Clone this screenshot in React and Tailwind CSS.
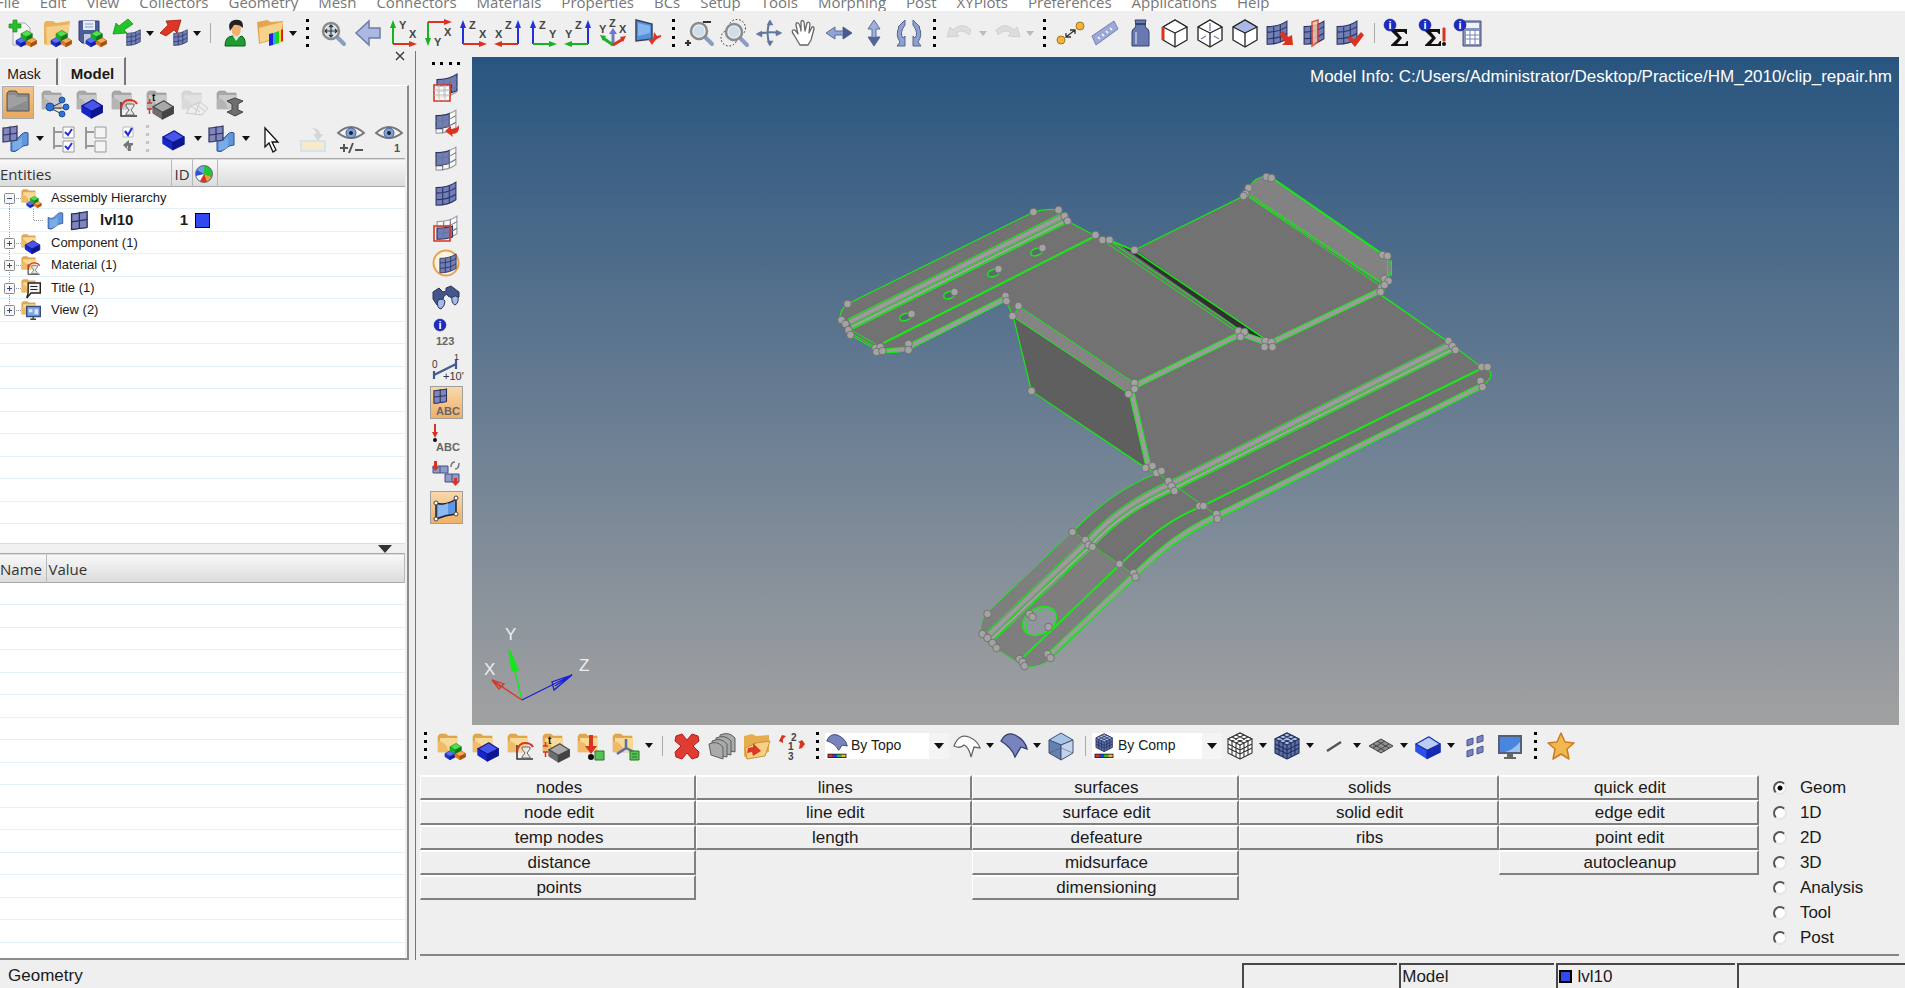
import { useState } from 'react';

const MENUS = [
  'File', 'Edit', 'View', 'Collectors', 'Geometry', 'Mesh', 'Connectors', 'Materials', 'Properties',
  'BCs', 'Setup', 'Tools', 'Morphing', 'Post', 'XYPlots', 'Preferences', 'Applications', 'Help',
];

const PAGES = ['Geom', '1D', '2D', '3D', 'Analysis', 'Tool', 'Post'];

const PANELS = [
  ['nodes', 'node edit', 'temp nodes', 'distance', 'points'],
  ['lines', 'line edit', 'length'],
  ['surfaces', 'surface edit', 'defeature', 'midsurface', 'dimensioning'],
  ['solids', 'solid edit', 'ribs'],
  ['quick edit', 'edge edit', 'point edit', 'autocleanup'],
];

/* ---------- icon parts, all drawn in a 28x28 box ---------- */

const Box = ({ x, y, s = 1, top, left, right }) => (
  <g transform={`translate(${x} ${y}) scale(${s})`} strokeLinejoin="round">
    <path d="M0 5l7 4v5l-7-4.500z" fill={left} stroke={left} />
    <path d="M7 9l8-4v5l-8 4z" fill={right} stroke={right} />
    <path d="M0 5l8-4.500 7 4.500-8 4z" fill={top} stroke={right} strokeWidth="0.800" />
  </g>
);

const BlueBox = ({ x = 10, y = 12, s = 1.1 }) => (
  <Box x={x} y={y} s={s} top="#4656ea" left="#1626c8" right="#0c1690" />
);

const GrayBox = ({ x = 10, y = 12, s = 1.1 }) => (
  <Box x={x} y={y} s={s} top="#a8a8a8" left="#6e6e6e" right="#444" />
);

const Cluster = ({ x = 0, y = 0 }) => (
  <g transform={`translate(${x} ${y})`}>
    <Box x={8} y={18} s={0.7} top="#5870f4" left="#1c30d0" right="#1020a0" />
    <Box x={18} y={18} s={0.7} top="#f6a860" left="#e07818" right="#a85008" />
    <Box x={13} y={11} s={0.75} top="#50e050" left="#18b020" right="#107818" />
  </g>
);

const Folder = ({ gray, faded }) => (
  <g opacity={faded ? 0.3 : 1}>
    <path d="M1 4l2-2h6l2 2h9v16H1z" fill={gray ? '#a9a9a9' : '#e2a64e'} stroke={gray ? '#8a8a8a' : '#d79a44'} strokeWidth="0.500" />
    <path d="M3 6h17l1 -2v13l-4 3H3z" fill={gray ? '#c9c9c9' : '#f8d995'} />
    <path d="M1 9q8 0 11 11H1z" fill={gray ? '#b4b4b4' : '#efbb66'} />
  </g>
);

const MESH_BLUE = '#707fb9';

const Mesh = ({ x = 3, y = 2, s = 1.1, wire, half }) => (
  <g transform={`translate(${x} ${y}) scale(${s})`} stroke={wire ? '#9a9a9a' : '#2b3560'} strokeWidth="1">
    <path d="M1 6q11 0 18-5v16q-7 5-18 5z" fill={wire ? '#f8f8f8' : MESH_BLUE} />
    {half === 'top' && <path d="M1 6q11 0 18-5v15l-5 2v-7q-6 2-13 1z" fill={MESH_BLUE} stroke="#2b3560" />}
    {half === 'left' && <path d="M1 6q8 0 12-2v12q-3 1-6 1v1l-6 0z" fill={MESH_BLUE} stroke="#2b3560" />}
    {half === 'bottom' && <path d="M1 12q9 0 14-2v10q-6 2-14 2z" fill={MESH_BLUE} stroke="#2b3560" />}
    <path d="M1 11q11 0 18-5M1 17q11 0 18-5M7 6v16M13 4v16" fill="none" stroke={wire ? '#6c7590' : '#2b3560'} />
  </g>
);

const MeshSmall = ({ x = 12, y = 11 }) => <Mesh x={x} y={y} s={0.75} />;

const Surf = ({ x = 8, y = 6 }) => (
  <g transform={`translate(${x} ${y})`}>
    <path d="M1 6q5 3 9-2t8-3v12q-5 0-9 4t-8 2z" fill="#5f97dc" stroke="#2d4f9a" />
    <path d="M3 8q5 2 9-3v10q-4 4-9 3z" fill="#86b5ec" opacity="0.700" />
  </g>
);

const Quad = ({ x, y, s = 1 }) => (
  <g transform={`translate(${x} ${y}) scale(${s})`} fill="#7f86c0" stroke="#2e3158" strokeWidth="1.200">
    <path d="M1 3q4 0 7-1v7q-3 1-7 1zM8 2q4 0 7-1v7q-3 1-7 1zM1 10q4 0 7-1v7q-3 1-7 1zM8 9q4 0 7-1v7q-3 1-7 1z" />
  </g>
);

const T = ({ x, y, size = 10, fill = '#444', children }) => (
  <text x={x} y={y} fontSize={size} fill={fill} fontWeight="bold" fontFamily="Liberation Sans, Arial, sans-serif">
    {children}
  </text>
);

const InfoDot = ({ x = 6, y = 6 }) => (
  <g>
    <circle cx={x} cy={y} r="6" fill="#1a2cc4" stroke="#0c1680" strokeWidth="0.500" />
    <T x={x - 1.5} y={y + 4} size={11} fill="#fff">i</T>
  </g>
);

const Curve = ({ x = 9, y = 11 }) => (
  <g transform={`translate(${x} ${y})`} fill="none">
    <path d="M1 2v14h16" stroke="#333" strokeWidth="1.500" />
    <path d="M1 8Q3 0 9 0q6 0 8 4" stroke="#e03020" strokeWidth="2" />
    <path d="M6 4h8v2l-3 4 3 4v1H6v-1l3-4-3-4z" fill="#e8e8e8" stroke="#666" />
  </g>
);

const Gauge = () => (
  <g>
    <T x={6} y={12} size={10} fill="#111">t</T>
    <path d="M1 14h5M3.500 10v4M1 20h5M3.500 20v5" stroke="#e03020" strokeWidth="1.500" />
  </g>
);

const Glass = ({ x = 0, y = 0 }) => (
  <g transform={`translate(${x} ${y})`}>
    <path d="M16 17l8 8" stroke="#8c9cc4" strokeWidth="4" strokeLinecap="round" />
    <circle cx="11" cy="12" r="8" fill="#e9f0f6" stroke="#8b8b8b" strokeWidth="2.500" />
    <circle cx="11" cy="12" r="5.500" fill="#cfdde9" />
  </g>
);

const GREEN = '#16b422';
const RED = '#dc3220';
const BLUE = '#2430d8';

const Axis = ({ x, y, up, across, upColor, acrossColor, labels }) => (
  <g>
    <path d={`M${x} ${y}v${up * 18}`} stroke={upColor} strokeWidth="2" />
    <path d={`M${x - 3} ${y + up * 16}l3 ${up * 8}l3 ${-up * 8}z`} fill={upColor} />
    <path d={`M${x} ${y}h${across * 17}`} stroke={acrossColor} strokeWidth="2" />
    <path d={`M${x + across * 16} ${y - 3}l${across * 8} 3l${-across * 8} 3z`} fill={acrossColor} />
    {labels.map(([t, lx, ly]) => <T key={t} x={lx} y={ly} size={11}>{t}</T>)}
  </g>
);

const Cube = ({ children, top = '#fff' }) => (
  <g stroke="#222" strokeWidth="1.300" fill="#fff" strokeLinejoin="round">
    <path d="M2 8L14 1l12 7v13l-12 7-12-7z" />
    <path d="M2 8L14 1l12 7-12 6z" fill={top} />
    <path d="M14 14v13" />
    {children}
  </g>
);

const Rubik = ({ fill, top, line = '#333', s = 1, x = 0, y = 0 }) => (
  <g transform={`translate(${x} ${y}) scale(${s})`} stroke={line} strokeWidth="1.100" strokeLinejoin="round">
    <path d="M2 7L14 1l12 6v14l-12 6-12-6z" fill={fill} />
    <path d="M2 7L14 1l12 6-12 6z" fill={top} />
    <path d="M14 13v14M6 5l12 6v14M10 3l12 6v14M22 5L10 11v14M18 3L6 9v14M2 12l12 6 12-6M2 16l12 6 12-6" fill="none" />
  </g>
);

const Monitor = () => (
  <g>
    <path d="M11 22h6v3h3v2H8v-2h3z" fill="#666" />
    <path d="M2 3h24v19H2z" fill="#555f78" />
    <path d="M4 5h20v15H4z" fill="#4a86e0" />
    <path d="M9 20q8-2 15-10v10z" fill="#9cc2f2" />
  </g>
);

const ICONS = {
  newModel: (
    <g>
      <path d="M5 4h12l5 5v17H5z" fill="#f4f4f4" stroke="#aaa" />
      <path d="M1 5h4V1h4v4h4v4H9v4H5V9H1z" fill="#28c028" stroke="#108010" strokeWidth="0.600" />
      <Cluster />
    </g>
  ),
  openModel: <g><path d="M1 4l2-2h7l3 2 14-2-3 20-20 4-3-1z" fill="#e9b25b" /><path d="M3 8l19-2 5-1-5 17-18 4z" fill="#f5d08a" /><Cluster /></g>,
  saveModel: (
    <g>
      <path d="M1 2h20v22H4l-3-3z" fill="#4c5c98" stroke="#303c70" />
      <path d="M5 2h12v9H5z" fill="#e6ecf6" />
      <path d="M7 5h8M7 8h8" stroke="#8ea0c8" />
      <path d="M6 15h10v9H6z" fill="#c4cbe0" />
      <Cluster />
    </g>
  ),
  importFile: <g><MeshSmall x={13} y={10} /><path d="M0 15l3-11 3 3 9-7 5 5-9 6 3 3z" fill="#22c428" stroke="#108418" strokeWidth="0.700" /></g>,
  exportFile: <g><MeshSmall x={13} y={10} /><path d="M0 14l8-8-2-4 15-1-4 13-3-3-8 6z" fill="#e03424" stroke="#901408" strokeWidth="0.700" /></g>,
  user: (
    <g>
      <path d="M4 27q0-10 8-10l4 2 5-2q4 3 3 10z" fill="#1e9c30" stroke="#0e5c18" />
      <path d="M12 17l3 5 4-5z" fill="#d8e8d8" />
      <path d="M10 5q8-5 10 4l-1 6q-4 5-8-1z" fill="#f0b070" />
      <path d="M9 12Q6 3 13 1q10-2 9 8-4-4-9-3z" fill="#222" />
    </g>
  ),
  profiles: (
    <g>
      <path d="M1 3l10-2 4 2 12-1v16L3 25z" fill="#e2a64e" />
      <path d="M3 9l11-3 13-3-3 14-20 7z" fill="#f7d28c" />
      <path d="M13 15l4-1v12l-4 1z" fill="#2020e0" /><path d="M17 14l3-1v12l-3 1z" fill="#20b0f0" />
      <path d="M20 13l3-1v12l-3 1z" fill="#20d020" /><path d="M23 12l2-1v12l-2 1z" fill="#f0e020" /><path d="M25 11l2-1v12l-2 1z" fill="#e02010" />
    </g>
  ),
  fit: <g><Glass x={1} y={0} /><path d="M12 6v12M6 12h12M10 8l2-2 2 2M10 16l2 2 2-2M8 10l-2 2 2 2M16 10l2 2-2 2" fill="none" stroke="#333" strokeWidth="1.200" /></g>,
  back: <path d="M2 14L15 2v7h11v10H15v7z" fill="#a9b9e2" stroke="#6d7ca8" strokeWidth="1.500" />,
  xyTop: <Axis x={4} y={25} up={-1} across={1} upColor={GREEN} acrossColor={RED} labels={[['Y', 10, 10], ['X', 20, 19]]} />,
  xyBottom: <Axis x={4} y={3} up={1} across={1} upColor={GREEN} acrossColor={RED} labels={[['X', 20, 17], ['Y', 10, 27]]} />,
  xzLeft: <Axis x={4} y={25} up={-1} across={1} upColor={BLUE} acrossColor={RED} labels={[['Z', 10, 10], ['X', 20, 19]]} />,
  xzRight: <Axis x={24} y={25} up={-1} across={-1} upColor={BLUE} acrossColor={RED} labels={[['Z', 11, 10], ['X', 1, 19]]} />,
  yzFront: <Axis x={4} y={25} up={-1} across={1} upColor={BLUE} acrossColor={GREEN} labels={[['Z', 10, 10], ['Y', 20, 19]]} />,
  yzRear: <Axis x={24} y={25} up={-1} across={-1} upColor={BLUE} acrossColor={GREEN} labels={[['Z', 11, 10], ['Y', 1, 19]]} />,
  iso: (
    <g>
      <path d="M14 27V12" stroke="#6c78c8" strokeWidth="3" /><path d="M10 15l4-6 4 6z" fill="#6c78c8" />
      <path d="M14 26L4 19" stroke={GREEN} strokeWidth="3" /><path d="M1 16l6 1-3 5z" fill={GREEN} />
      <path d="M14 26l10-6" stroke={RED} strokeWidth="3" /><path d="M27 17l-6 1 3 5z" fill={RED} />
      <T x={10} y={8} size={11}>Z</T><T x={0} y={14} size={11}>Y</T><T x={20} y={14} size={11}>X</T>
    </g>
  ),
  savedView: (
    <g>
      <path d="M2 1l16 4v15L2 22z" fill="#5590dc" stroke="#345" strokeWidth="1.500" />
      <path d="M4 4l12 3v7L4 17z" fill="#86b4ee" />
      <path d="M14 20l4 6q3-6 9-8v-2l-4 1-3-4-1 7z" fill="#e03420" />
    </g>
  ),
  zoomInOut: <g><Glass x={3} y={0} /><path d="M18 3h8M0 24h6M3 21v6" stroke="#333" strokeWidth="2.200" /></g>,
  zoomArea: <g><circle cx="17" cy="9" r="8.500" fill="none" stroke="#222" strokeDasharray="1.500 2" /><circle cx="9" cy="19" r="8" fill="none" stroke="#222" strokeDasharray="1.500 2" /><Glass x={3} y={1} /></g>,
  center: (
    <g stroke="#64779c" strokeWidth="2" fill="#64779c">
      <path d="M15 2q-5 12 0 24M3 15q12-3 22-1" fill="none" />
      <path d="M12 6l3-5 3 5zM12 22l3 5 3-5zM7 12l-6 3 6 3zM21 11l6 3-6 3z" strokeWidth="0.500" />
    </g>
  ),
  pan: (
    <path
      d="M10 26L4 16q-3-4-1-5t5 4L6 6q0-3 2-2t3 8V3q1-3 3 0l1 9 2-8q2-2 3 1l-1 9 3-6q2-1 2 2l-3 11-3 5z"
      fill="#fff" stroke="#666" strokeWidth="1.300" strokeLinejoin="round"
    />
  ),
  rotateH: <g><path d="M1 14l9-6v4h8V8l9 6-9 6v-4h-8v4z" fill="#8fa3d4" stroke="#5d6c9c" /><path d="M18 8l9 6-9 6z" fill="#4a598e" /></g>,
  rotateV: <g><path d="M14 1l6 9h-4v8h4l-6 9-6-9h4v-8H8z" fill="#9fb1dc" stroke="#5d6c9c" /><path d="M8 18h12l-6 9z" fill="#54649a" /></g>,
  spin: (
    <g fill="#8ea1d2" stroke="#55648f">
      <path d="M3 8l7-7v5q-6 8-2 13l2-2v10H2l3-4Q0 16 4 8z" />
      <path d="M25 8l-7-7v5q6 8 2 13l-2-2v10h8l-3-4q5-7 1-15z" />
    </g>
  ),
  undo: <path d="M1 18L4 8l3 3q9-9 18 0l-2 5q-7-7-13-2l3 3z" fill="#dcdede" stroke="#cfd2d2" />,
  redo: <path d="M27 18L24 8l-3 3Q12 2 3 11l2 5q7-7 13-2l-3 3z" fill="#dcdede" stroke="#cfd2d2" />,
  nodes: (
    <g>
      <circle cx="5" cy="21" r="4" fill="#f4b43c" stroke="#a87818" /><circle cx="24" cy="7" r="4" fill="#f4b43c" stroke="#a87818" />
      <path d="M10 18l9-7M10 14v4h5M14 11h5v4" fill="none" stroke="#333" strokeWidth="1.300" />
    </g>
  ),
  ruler: <g><path d="M1 17L23 2l4 8L5 26z" fill="#9ca9d8" stroke="#7382b8" /><path d="M7 18l2 2M11 15l2 2M15 12l2 2M19 9l2 2" stroke="#fff" strokeWidth="1.500" /></g>,
  mass: <g><path d="M9 1h11l-1 5 1 3q3 1 3 4v14H6V13q0-3 3-4l1-3z" fill="#6779b0" stroke="#35436e" /><path d="M10 13v12" stroke="#a6b3da" strokeWidth="2" /><path d="M9 5h11" stroke="#35436e" strokeWidth="2" /></g>,
  cubeEdge: <Cube><path d="M2 8v13" stroke={RED} strokeWidth="3" /></Cube>,
  cubeHidden: <Cube><path d="M14 4v8M10 17l-5 3M18 17l5 3" stroke="#7080b0" /></Cube>,
  cubeFace: <Cube top="#a9b9e4" />,
  meshArrow: <g><Mesh x={0} y={1} /><path d="M13 15l4-3 5 6 4-2 1 10H16l3-3z" fill={RED} /></g>,
  meshCut: <g><Mesh x={2} y={1} /><path d="M11 3l6-2v22l-6 4z" fill="#f6c8a8" opacity="0.800" stroke={RED} strokeWidth="1.500" /></g>,
  meshCheck: <g><Mesh x={0} y={1} /><path d="M11 19l4-2 3 4 7-8 3 3-9 12z" fill={RED} /></g>,
  sigma: <g><path d="M6 10h16v5h-1l-2-2h-7l5 6-5 6h8l2-3h1v5H6v-1l7-7-7-7z" fill="#111" /><InfoDot x={5} y={6} /></g>,
  sigmaAlert: <g><path d="M5 10h15v5h-1l-2-2h-6l5 6-5 6h7l2-3h1v5H5v-1l7-7-7-7z" fill="#111" /><InfoDot x={5} y={6} /><path d="M23 9h2v13h-2z" fill={RED} stroke={RED} /><circle cx="24" cy="25" r="2" fill="#111" /></g>,
  calc: <g><path d="M8 2h18v25H8z" fill="#8994bc" stroke="#444f78" /><path d="M11 4h13v5H11z" fill="#eef2fa" /><path d="M11 12h13v13H11z" fill="#fff" /><path d="M11 16h13M11 20h13M15 12v13M20 12v13" stroke="#7482b4" /><InfoDot x={5} y={6} /></g>,

  folderGray: <g><path d="M3 4l2-2h7l2 3h11v17H3z" fill="#8d8d8d" stroke="#555" /><path d="M4 6h7l2 2h10v4L4 20z" fill="#b4b4b4" opacity="0.500" /></g>,
  folderTree: (
    <g>
      <Folder gray />
      <path d="M9 19l12-6M9 19h14M9 19l12 6" stroke="#333" />
      <g fill="#2f72d8" stroke="#123c88" strokeWidth="0.800"><circle cx="9" cy="18" r="4" /><circle cx="21" cy="11" r="3" /><circle cx="25" cy="18" r="3" /><circle cx="21" cy="25" r="3" /></g>
    </g>
  ),
  folderBlue: <g><Folder gray /><BlueBox x={6} y={10} s={1.35} /></g>,
  folderCurve: <g><Folder gray /><Curve x={9} y={11} /></g>,
  folderThick: <g><Folder gray /><Gauge /><GrayBox x={7} y={11} s={1.35} /></g>,
  folderFaded: <g opacity="0.350"><Folder gray /><path d="M5 24l5-7 9-4 8 6-6 7zM10 17l9 6M19 13l-5 12M14 15l10 7" fill="#eee" stroke="#888" /></g>,
  folderBeam: <g><Folder gray /><path d="M11 12l8-3 8 3-5 3v6l5 2-8 4-8-4 5-2v-6z" fill="#6f6f6f" stroke="#444" /></g>,
  elemSurf: <g><Surf x={8} y={7} /><Quad x={0} y={0} s={1} /></g>,
  allOn: (
    <g>
      <path d="M4 2v22M4 7h8M4 21h8" stroke="#999" strokeWidth="2" />
      <path d="M13 2h11v11H13zM13 16h11v11H13z" fill="#fff" stroke="#999" />
      <path d="M15 7l3 3 4-6M15 21l3 3 4-6" fill="none" stroke={BLUE} strokeWidth="2" />
    </g>
  ),
  allOff: <g><path d="M4 2v22M4 7h8M4 21h8" stroke="#999" strokeWidth="2" /><path d="M13 2h11v11H13zM13 16h11v11H13z" fill="#f4f4f4" stroke="#999" /></g>,
  reverse: <g><path d="M9 12V2h10v10z" fill="#fff" stroke="#bbb" /><path d="M11 6l3 4 4-7" fill="none" stroke={BLUE} strokeWidth="2.200" /><path d="M9 20l6-5v3h4v2q-3 0-2 6h-3q-1-2 0-5h-1v3z" fill="#777" /></g>,
  blueSlab: <BlueBox x={3} y={5} s={1.4} />,
  cursor: <path d="M9 3v19l4-4 4 9 3-2-4-8h6z" fill="#fff" stroke="#111" strokeWidth="1.300" />,
  addTo: <g opacity="0.700"><path d="M2 16h24v10H2z" fill="#fbe8b8" stroke="#c6e2ee" strokeWidth="2" /><path d="M13 3q8 0 8 6h3l-5 7-5-7h3q0-4-4-6z" fill="#ccc" /></g>,
  eyePM: (
    <g>
      <path d="M1 8Q14-4 27 8 14 18 1 8z" fill="#f2f4f8" stroke="#777" strokeWidth="1.800" />
      <circle cx="14" cy="8" r="5" fill="#7ea3dc" stroke="#4a5f90" /><circle cx="14" cy="8" r="2" fill="#222" />
      <path d="M3 23h8M7 19v8M12 28l4-10M18 25h8" stroke="#555" strokeWidth="2" />
    </g>
  ),
  eyeOne: (
    <g>
      <path d="M1 8Q14-4 27 8 14 18 1 8z" fill="#f2f4f8" stroke="#777" strokeWidth="1.800" />
      <circle cx="14" cy="8" r="5" fill="#7ea3dc" stroke="#4a5f90" /><circle cx="14" cy="8" r="2" fill="#222" />
      <T x={19} y={27} size={11} fill="#555">1</T>
    </g>
  ),

  maskBox: <g><Mesh x={4} y={-1} wire half="top" /><path d="M2 11h16v16H2z" fill="#fff" fillOpacity="0.700" stroke={RED} strokeWidth="1.600" /><path d="M7 11v16M13 11v16M2 16h16M2 21h16" stroke="#bbb" /></g>,
  maskReverse: <g><Mesh x={3} y={0} wire half="left" /><path d="M13 22l6-5v3q6 0 8-4 1 9-7 9l1 3z" fill={RED} /></g>,
  unmaskAdj: <Mesh wire half="left" />,
  unmaskAll: <Mesh />,
  unmaskBox: <g><Mesh x={4} y={1} wire half="bottom" /><path d="M2 12h16v15H2z" fill="none" stroke={RED} strokeWidth="1.600" /></g>,
  sphere: <g><circle cx="14" cy="14" r="12.500" fill="#fbf3e4" stroke="#eaa04c" strokeWidth="2" /><Mesh x={7} y={4} s={0.9} /></g>,
  find: (
    <g fill="#44568a" stroke="#27345e">
      <path d="M1 8l6-4 4 4 3-1 0-3 5-2 8 6v5l-5 2-6-3-1-2-3 2-2 6-5 3-4-6z" />
      <path d="M6 16q5-2 7 1 0 5-4 8-5-1-3-9zM20 13q4-2 6 0 1 6-3 8-4-2-3-8z" fill="#a9bbe4" />
    </g>
  ),
  numbers: <g><InfoDot x={8} y={6} /><T x={4} y={26} size={11} fill="#666">123</T></g>,
  scale: (
    <g>
      <path d="M2 17v8M2 21l22-11M24 6v9" stroke="#44598f" strokeWidth="2.200" fill="none" />
      <text x="0" y="14" fontSize="10" fill="#333" fontFamily="Liberation Sans">0</text>
      <text x="22" y="6" fontSize="9" fill="#333" fontFamily="Liberation Sans">1</text>
      <text x="11" y="26" fontSize="11" fill="#333" fontFamily="Liberation Sans">+10&#39;</text>
    </g>
  ),
  elemAbc: <g><Quad x={1} y={-1} s={0.9} /><T x={4} y={26} size={11} fill="#666">ABC</T></g>,
  loadAbc: <g><path d="M3 0v10" stroke={RED} strokeWidth="2" /><path d="M0 8h6l-3 6z" fill={RED} /><circle cx="3" cy="16" r="2" fill="#111" /><T x={4} y={27} size={11} fill="#666">ABC</T></g>,
  loadsElem: (
    <g>
      <path d="M1 7h15v7H1zM13 15h14v8H13z" fill="#8d9cca" stroke="#43517f" /><path d="M8 7v7M20 15v8" stroke="#43517f" />
      <path d="M2 2h3v6h2l-3.500 4L0 8h2zM22 19h3v4h2l-3.500 4-3.500-4h2z" fill={RED} />
      <path d="M19 8q0-5 4-5M27 4q0 6-4 6" stroke="#777" fill="none" strokeWidth="1.500" />
    </g>
  ),
  surfPoints: (
    <g>
      <path d="M4 9q10 3 20-4v15q-10 1-20 5z" fill="#5f97e8" stroke="#222" strokeWidth="1.500" />
      <path d="M6 11q6 1 10-2v11q-5 1-10 3z" fill="#8cb8f4" />
      <g fill="#fff" stroke="#444"><circle cx="4" cy="9" r="2" /><circle cx="24" cy="4" r="2" /><circle cx="24" cy="20" r="2" /><circle cx="4" cy="25" r="2" /></g>
    </g>
  ),

  assembly: <g><Folder /><Cluster /></g>,
  component: <g><Folder /><BlueBox x={6} y={10} s={1.35} /></g>,
  material: <g><Folder /><Curve /></g>,
  property: <g><Folder /><Gauge /><GrayBox x={7} y={11} s={1.35} /></g>,
  loadCol: <g><Folder /><path d="M12 3h4v11h4l-6 8-6-8h4z" fill={RED} /><circle cx="14" cy="25" r="3" fill="#111" /><path d="M18 19h9v9h-9z" fill="#58c058" stroke="#207820" /></g>,
  systemCol: <g><Folder /><path d="M14 7v9l-9 6M14 16l8 4" fill="none" stroke="#5c6fa8" strokeWidth="2.500" /><path d="M18 19h9v9h-9z" fill="#58c058" stroke="#207820" /><path d="M20 22h5M20 25h5" stroke="#207820" /></g>,
  remove: <path d="M3 4l6-2 5 6 5-6 6 2 1 5-6 5 6 6-1 5-6 2-5-6-5 6-6-2-1-5 6-6-6-5z" fill="#e03c34" stroke="#b02018" />,
  cards: (
    <g fill="#a9abab" stroke="#5c5e5e">
      <path d="M12 3q9-4 15 3v14l-15-3z" /><path d="M8 6q9-4 15 3v14L8 20z" /><path d="M4 9q9-4 15 3v13L4 22z" /><path d="M1 12q8-4 14 3v12L3 23z" />
    </g>
  ),
  organize: <g><path d="M1 4l8-2 4 2 13-1v17L4 27l-3-3z" fill="#e8ac50" /><path d="M2 16l11-5 14-2-5 15-18 3z" fill="#f7d088" stroke="#d09038" /><path d="M5 16l5-1 0-4 8 8-8 5-1-4-5 1z" fill="#e03820" /></g>,
  renumber: <g><T x={13} y={9}>2</T><T x={10} y={18}>1</T><T x={10} y={28}>3</T><path d="M1 9l3-6 4 1-3 3v4zM27 12l-3-4-4 2 2 1-1 6 3-1z" fill={RED} /></g>,
  surfWire: <path d="M1 14Q6 1 16 5q9 4 11 11l-6-1-3 10q-2-10-7-12-4 4-10 1z" fill="#fff" stroke="#666" strokeWidth="1.300" />,
  surfSolid: <path d="M1 9Q6-1 15 3q10 5 12 14l-6-2-6 10Q12 16 1 9z" fill="#7784bd" stroke="#333d70" strokeWidth="1.300" />,
  glassCube: (
    <g stroke="#40527c" strokeLinejoin="round">
      <path d="M2 8L14 1l12 7-12 5z" fill="#a7c3e6" /><path d="M2 8l12 5v15L2 21z" fill="#6781ae" /><path d="M26 8l-12 5v15l12-7z" fill="#c1d4ea" />
      <path d="M14 16l12 5M14 16L2 21" fill="none" opacity="0.500" />
    </g>
  ),
  rubikWire: <Rubik fill="#fff" top="#fff" />,
  rubikSolid: <Rubik fill="#5b6fa8" top="#a9bfe6" line="#24305c" />,
  lineElem: <path d="M7 19L21 10" stroke="#555" strokeWidth="2.500" />,
  shell: <g stroke="#444" fill="#8d908c"><path d="M2 14l12-7 12 7-12 7z" /><path d="M6 12l12 7M10 9l12 7M22 12l-12 7M18 9L6 16" /></g>,
  slab: <Box x={2} y={4} s={1.6} top="#b8cdf0" left="#2c50e8" right="#182cb0" />,
  tiles: <g fill="#7a84bc" stroke="#4a5590"><path d="M6 8l6-2v6l-6 2zM16 5l6-2v6l-6 2zM6 19l6-2v6l-6 2zM16 16l6-2v6l-6 2z" /></g>,
  monitor: <Monitor />,
  star: <path d="M14 1l4 9 9 1-7 6 2 10-8-5-8 5 2-10-7-6 9-1z" fill="#f2b850" stroke="#d07a20" strokeWidth="1.500" strokeLinejoin="round" />,
  title: <g><Folder /><path d="M10 7h17v14H14l-6 7 2-7z" fill="#f4f4f4" stroke="#222" strokeWidth="2" /><path d="M13 12h10M13 16h10" stroke="#222" strokeWidth="1.500" /></g>,
  view: <g><Folder /><path d="M8 9h19v14H8z" fill="#7da8e8" stroke="#3a4c78" strokeWidth="2" /><path d="M11 13h5v4h-5zM19 13h5v7h-5z" fill="#dce8fa" /><path d="M17 23v4M13 27h8" stroke="#444" strokeWidth="2" /></g>,
  surface: <Surf x={5} y={5} />,
  elements: <Quad x={4} y={3} s={1.3} />,
  byTopo: <g><path d="M2 8Q6-1 14 1q10 4 12 13l-6-1-4 6Q12 11 2 8z" fill="#7784bd" stroke="#333d70" /><ColorBar /></g>,
  byComp: <g><Rubik fill="#5b6fa8" top="#a9bfe6" line="#24305c" s={0.8} x={3} y={-1} /><ColorBar /></g>,
};

function ColorBar() {
  return (
    <g>
      <path d="M3 23h22v5H3z" fill="#222" /><path d="M4 24h5v3H4z" fill="#e03020" /><path d="M9 24h5v3H9z" fill="#2040e0" />
      <path d="M14 24h5v3h-5z" fill="#20c020" /><path d="M19 24h5v3h-5z" fill="#f0b040" />
    </g>
  );
}

const Icon = ({ name, className = 'size-7' }) => (
  <svg viewBox="0 0 28 28" className={`${className} shrink-0 overflow-visible`} aria-hidden="true">{ICONS[name]}</svg>
);

/* ---------- toolbar pieces ---------- */

const Tool = ({ name }) => (
  <button type="button" aria-label={name} className="flex h-7 w-[35px] shrink-0 items-center justify-center">
    <Icon name={name} />
  </button>
);

const Caret = ({ faded }) => (
  <button type="button" aria-label="More options" className="flex h-7 w-3 shrink-0 items-center justify-center">
    <svg viewBox="0 0 8 5" className="h-[5px] w-2"><path d="M0 0h8L4 5z" fill={faded ? '#bbb' : '#111'} /></svg>
  </button>
);

const Grip = () => (
  <div className="flex h-7 w-4 shrink-0 flex-col items-center justify-between">
    {[0, 1, 2, 3].map(i => <span key={i} className="size-[3px] bg-black" />)}
  </div>
);

const Sep = () => (
  <div className="flex h-7 w-[14px] shrink-0 justify-center"><span className="my-1 w-px bg-[#aaa]" /></div>
);

// "|" separator, ":" grip, "v" caret, "-" faded caret
const Tools = ({ items }) => items.map((item, i) => {
  if (item === '|') return <Sep key={i} />;
  if (item === ':') return <Grip key={i} />;
  if (item === 'v') return <Caret key={i} />;
  if (item === '-') return <Caret key={i} faded />;
  return <Tool key={i} name={item} />;
});

const Combo = ({ icon, label, options, className }) => (
  <div className={`relative flex h-[26px] shrink-0 items-center bg-white ${className}`}>
    <Icon name={icon} className="size-6" />
    <select
      aria-label={label}
      className="h-full min-w-0 flex-1 appearance-none bg-transparent pl-[2px] text-[14px] outline-none"
    >
      {options.map(o => <option key={o}>{o}</option>)}
    </select>
    <span className="pointer-events-none absolute inset-y-0 right-0 flex w-5 items-center justify-center bg-[#f4f4f4]">
      <svg viewBox="0 0 10 6" className="h-[6px] w-[10px]"><path d="M0 0h10L5 6z" fill="#111" /></svg>
    </span>
  </div>
);

const TopToolbar = () => (
  <div className="flex h-10 shrink-0 items-start overflow-hidden bg-[#efefef] pt-2 pl-1">
    <Tools
      items={[
        'newModel', 'openModel', 'saveModel', 'importFile', 'v', 'exportFile', 'v', '|', 'user', 'profiles', 'v', ':',
        'fit', 'back', 'xyTop', 'xyBottom', 'xzLeft', 'xzRight', 'yzFront', 'yzRear', 'iso', 'savedView', ':',
        'zoomInOut', 'zoomArea', 'center', 'pan', 'rotateH', 'rotateV', 'spin', ':', 'undo', '-', 'redo', '-', ':',
        'nodes', 'ruler', 'mass', 'cubeEdge', 'cubeHidden', 'cubeFace', 'meshArrow', 'meshCut', 'meshCheck', '|',
        'sigma', 'sigmaAlert', 'calc',
      ]}
    />
  </div>
);

/* ---------- model browser ---------- */

const ROWS = [
  { icon: 'component', label: 'Component (1)' },
  { icon: 'material', label: 'Material (1)' },
  { icon: 'title', label: 'Title (1)' },
  { icon: 'view', label: 'View (2)' },
];

const Expander = ({ open, last }) => (
  <button type="button" aria-label={open ? 'Collapse' : 'Expand'} className="shrink-0">
    <svg viewBox="0 0 21 22" className="h-[22px] w-[21px]">
      <path d={open ? 'M9.500 11v11' : last ? 'M9.500 0v11' : 'M9.500 0v22'} stroke="#999" strokeDasharray="1 1" />
      <path d="M14 11.500h7" stroke="#999" strokeDasharray="1 1" />
      <rect x="4.500" y="6.500" width="10" height="10" rx="1" fill="#f6f6f6" stroke="#8a8a8a" />
      <path d={open ? 'M7 11.500h5' : 'M7 11.500h5M9.500 9v5'} stroke="#2b4a9c" />
    </svg>
  </button>
);

const TreeRow = ({ icon, label, open, last }) => (
  <tr className="h-[22px] border-b border-[#e2f1fa] even:h-[23px]">
    <td colSpan={4} className="p-0">
      <div className="flex h-[21px] items-center">
        <Expander open={open} last={last} />
        <Icon name={icon} className="size-5" />
        <span className="pl-[10px]">{label}</span>
      </div>
    </td>
  </tr>
);

const EmptyRows = ({ count, span }) => Array.from({ length: count }, (_, i) => (
  <tr key={i} className="h-[22px] border-b border-[#e2f1fa] even:h-[23px]"><td colSpan={span} className="p-0" /></tr>
));

const headCell = 'border-r border-[#b8b8b8] p-0 pt-[2px] text-left font-normal whitespace-nowrap';

const EntityTable = () => (
  <table className="w-full table-fixed border-collapse text-[13px] leading-5">
    <colgroup><col className="w-[171px]" /><col className="w-[21px]" /><col className="w-[25px]" /><col /></colgroup>
    <thead className="h-[28px] border-t border-b border-[#a8a8a8] bg-linear-to-b from-[#f8f8f8] to-[#dcdcdc] font-['Open_Sans',sans-serif] text-[15px] text-[#333]">
      <tr>
        <th className={headCell}>Entities</th>
        <th className={`${headCell} pl-[3px]`}>ID</th>
        <th className={headCell} aria-label="Color">
          <svg viewBox="0 0 18 18" className="ml-[2px] size-[18px]">
            <circle cx="9" cy="9" r="8.500" fill="#2a52e0" />
            <path d="M9 9V1a8 8 0 0 1 7.500 11z" fill="#20c830" /><path d="M9 9l7.500 3q-2 4-5 5z" fill="#f0a030" />
            <path d="M9 9l3 8q-4 1-7-1z" fill="#e03020" /><path d="M9 9l-4 7q-3-1-4-5z" fill="#fff" />
            <path d="M9 9L2 5Q4 1 9 1z" fill="#70a0e8" /><circle cx="9" cy="9" r="8.500" fill="none" stroke="#777" />
          </svg>
        </th>
        <th className="p-0" />
      </tr>
    </thead>
    <tbody>
      <TreeRow icon="assembly" label="Assembly Hierarchy" open />
      <tr className="h-[22px] border-b border-[#e2f1fa] text-[15px] font-bold even:h-[23px]">
        <td className="p-0">
          <div className="flex h-[22px] items-center">
            <svg viewBox="0 0 43 22" className="h-[22px] w-[43px] shrink-0">
              <path d="M9.500 0v22M33.500 0v11.500h10" fill="none" stroke="#999" strokeDasharray="1 1" />
            </svg>
            <Icon name="surface" className="size-6" />
            <Icon name="elements" className="size-6" />
            <span className="pl-[9px]">lvl10</span>
          </div>
        </td>
        <td className="p-0 pr-1 text-right">1</td>
        <td className="p-0"><span className="ml-[3px] block size-[15px] border border-black bg-[#3048f0]" /></td>
        <td className="p-0" />
      </tr>
      {ROWS.map((row, i) => <TreeRow key={row.label} {...row} last={i === ROWS.length - 1} />)}
      <EmptyRows count={11} span={4} />
    </tbody>
  </table>
);

const ModelBrowser = () => (
  <aside className="flex w-[409px] shrink-0 flex-col overflow-hidden">
    <div className="flex h-[34px] shrink-0 items-end" role="tablist">
      <button type="button" role="tab" className="h-[27px] w-[58px] border-t border-r-2 border-t-white border-r-[#777] pt-1 pr-2 text-center text-[14px] leading-5">
        Mask
      </button>
      <button type="button" role="tab" aria-selected="true" className="ml-[2px] h-7 w-[66px] border-t border-r-2 border-l border-t-white border-r-[#777] border-l-white pt-1 text-center text-[15px] leading-5 font-bold">
        Model
      </button>
      <button type="button" aria-label="Close" className="mr-1 ml-auto size-[10px] self-start">
        <svg viewBox="0 0 10 10" className="size-[10px]"><path d="M1 1l8 8M9 1L1 9" stroke="#333" strokeWidth="1.300" /></svg>
      </button>
    </div>
    <div className="flex min-h-0 flex-1 flex-col overflow-hidden border-t border-r-2 border-b-2 border-t-white border-r-[#8c8c8c] border-b-[#8c8c8c] pr-[2px]">
      <div className="flex h-[33px] shrink-0 items-center gap-[7px] pl-[2px]">
        <button type="button" aria-label="Folders" aria-pressed="true" className="flex h-[33px] w-8 items-center justify-center border border-[#a9a9a9] bg-linear-to-b from-[#f4c48c] to-[#e8a860]">
          <Icon name="folderGray" />
        </button>
        {['folderTree', 'folderBlue', 'folderCurve', 'folderThick', 'folderFaded', 'folderBeam'].map(n => (
          <button key={n} type="button" aria-label={n}><Icon name={n} /></button>
        ))}
      </div>
      <div className="flex h-[39px] shrink-0 items-center justify-between px-[2px]">
        <div className="flex items-center gap-1">
          <button type="button" aria-label="Elements and geometry"><Icon name="elemSurf" /></button>
          <Caret />
          {['allOn', 'allOff', 'reverse'].map(n => <button key={n} type="button" aria-label={n}><Icon name={n} /></button>)}
          <div className="flex h-7 w-[10px] flex-col justify-between">
            {[0, 1, 2, 3].map(i => <span key={i} className="size-[3px] bg-[#c4c4c4]" />)}
          </div>
          <button type="button" aria-label="Components"><Icon name="blueSlab" /></button>
          <Caret />
          <button type="button" aria-label="Display filter"><Icon name="elemSurf" /></button>
          <Caret />
          <button type="button" aria-label="Selector"><Icon name="cursor" /></button>
        </div>
        <div className="flex items-center gap-[10px]">
          {['addTo', 'eyePM', 'eyeOne'].map(n => <button key={n} type="button" aria-label={n}><Icon name={n} /></button>)}
        </div>
      </div>
      <div className="h-[385px] shrink-0 overflow-hidden bg-white"><EntityTable /></div>
      <div className="flex h-[10px] shrink-0 items-center justify-end border-t border-[#ddd] bg-[#f0f0f0] pr-[13px]">
        <svg viewBox="0 0 14 8" className="h-2 w-[14px]"><path d="M0 0h14L7 8z" fill="#333" /></svg>
      </div>
      <div className="min-h-0 flex-1 overflow-hidden bg-white">
        <table className="w-full table-fixed border-collapse">
          <colgroup><col className="w-[46px]" /><col /></colgroup>
          <thead className="h-[29px] border-t border-b border-[#a8a8a8] bg-linear-to-b from-[#f8f8f8] to-[#dcdcdc] font-['Open_Sans',sans-serif] text-[15px] leading-5 text-[#333]">
            <tr><th className={headCell}>Name</th><th className={`${headCell} pl-[2px]`}>Value</th></tr>
          </thead>
          <tbody><EmptyRows count={17} span={2} /></tbody>
        </table>
      </div>
    </div>
  </aside>
);

/* ---------- graphics area ---------- */

const NODES = [
  [1033, 212], [1058, 210], [1064, 216], [1067, 221], [1095, 235], [1102, 240], [1109, 240], [1134, 250],
  [847, 304], [841, 320], [845, 324], [848, 330], [850, 335], [875, 348], [880, 347], [876, 352], [882, 351],
  [908, 344], [908, 350], [1005, 296], [1006, 301], [1018, 306], [1012, 316], [1031, 391], [1134, 383], [1134, 389],
  [1128, 394], [911, 314], [954, 292], [998, 269], [1042, 248], [1248, 188], [1245, 194], [1243, 196], [1266, 177],
  [1271, 178], [1382, 255], [1387, 256], [1384, 279], [1388, 281], [1381, 287], [1384, 285], [1380, 292],
  [1238, 331], [1244, 332], [1240, 337], [1265, 341], [1271, 342], [1264, 347], [1272, 347], [1448, 341],
  [1452, 346], [1455, 350], [1481, 367], [1487, 367], [1480, 381], [1482, 387], [1145, 468], [1152, 466],
  [1156, 473], [1161, 471], [1168, 481], [1171, 486], [1174, 491], [1199, 506], [1203, 506], [1216, 514],
  [1217, 519], [1072, 532], [1085, 540], [1088, 545], [1092, 547], [1119, 564], [1133, 573], [1135, 577],
  [987, 614], [982, 634], [987, 638], [992, 643], [996, 648], [1019, 659], [1022, 662], [1024, 666], [1047, 654],
  [1050, 658], [1029, 614], [1032, 617], [1048, 627],
];

const HOLES = [[905, 317], [949, 295], [993, 273], [1036, 252]];

const RIB_LEFT = 'M850 324L1062 219';
const RIB_RIGHT = 'M1450 347L1173 485C1140 500 1115 515 1089 543L990 636';
const LIP = 'M1481 386L1216 516C1180 533 1160 550 1134 575L1048 656';
const LIT = '#9c9c9c';
const EDGE = '#17e817';

const Strip = ({ d, w = 4 }) => (
  <g fill="none">
    <path d={d} stroke={EDGE} strokeWidth={w + 2} />
    <path d={d} stroke={LIT} strokeWidth={w} />
  </g>
);

const Rib = ({ d }) => (
  <g fill="none">
    <path d={d} stroke={EDGE} strokeWidth="12" />
    <path d={d} stroke="#858585" strokeWidth="10" />
    <path d={d} stroke={LIT} strokeWidth="4" transform="translate(-1 -2)" />
    <path d={d} stroke={EDGE} transform="translate(0 1)" />
    <path d={d} stroke="#a4a4a4" strokeWidth="2" transform="translate(1 3)" />
    <path d={d} stroke={EDGE} strokeWidth="0.800" transform="translate(2 4)" />
  </g>
);

const ModelDrawing = () => (
  <svg viewBox="472 57 1426 668" className="absolute inset-0 size-full" role="img" aria-label="clip_repair model">
    {/* sheet metal body */}
    <path
      d="M1033 212Q1045 208 1059 210L1067 221 1095 236 1134 250 1243 196 1248 188Q1255 176 1268 176L1382 255Q1392 260 1391 270L1383 292 1381 295 1448 342 1478 365Q1492 367 1490 377L1482 388 1217 519C1180 537 1162 552 1135 577L1050 659Q1037 668 1024 666L995 648 981 636Q979 622 987 613L1072 532C1098 506 1120 488 1157 473L1145 468 1031 391 1013 317 1005 300 908 349Q895 354 880 352L850 335 840 320Q838 311 847 304z"
      fill="#727272" stroke={EDGE} strokeWidth="1.200"
    />
    <path d="M1072 532L987 613Q979 622 981 636L995 648 1024 666Q1037 668 1050 659L1135 577z" fill="#7e7e7e" />
    <path d="M1013 317L1129 394 1146 468 1031 391z" fill="#5f5f5f" stroke={EDGE} />
    <path d="M1018 306L1134 383 1129 394 1013 317z" fill="#848484" stroke={EDGE} />
    <path d="M1248 188Q1255 176 1268 176L1382 255Q1392 260 1391 270L1383 285 1248 196z" fill="#828282" stroke={EDGE} />
    <path d="M1118 244L1136 251 1265 340 1242 331z" fill="#303030" />
    <g fill="none" stroke={EDGE}>
      <path d="M1109 240L1134 251 1266 340" strokeWidth="1.500" />
      <path d="M1109 241L1239 330M1106 243L1234 330" />
      <path d="M1248 197L1377 284M1250 195L1379 281" />
      <path d="M1273 179L1382 254" strokeWidth="2" />
      <path d="M1387 258v19M1391 260v16" />
      <path d="M1380 295L1448 342" />
      <path d="M1073 532L1135 576M1157 473L1217 516" />
      <path d="M883 343L1095 236" strokeWidth="2" />
      <path d="M850 333L875 347M852 331L877 345" />
      <path d="M1478 370L1202 506C1165 521 1148 538 1120 564L1023 657" strokeWidth="2" />
    </g>

    <Rib d={RIB_LEFT} />
    <Rib d={RIB_RIGHT} />

    <Strip d={LIP} />
    <Strip d="M1134 386L1240 334" />
    <Strip d="M1241 334L1267 343" />
    <Strip d="M1270 343L1381 290" />
    <Strip d="M1131 392L1148 467" />
    <Strip d="M908 347L1004 299" />
    <Strip d="M882 351L908 349" w={3} />

    {HOLES.map(([x, y]) => (
      <ellipse key={x} cx={x} cy={y} rx="6" ry="3.500" transform={`rotate(-20 ${x} ${y})`} fill="#5e6a72" stroke={EDGE} strokeWidth="1.500" />
    ))}
    <ellipse cx="1039" cy="621" rx="18" ry="13" transform="rotate(-30 1039 621)" fill="#90969e" stroke={EDGE} strokeWidth="1.500" />
    <path d="M1026 632Q1023 620 1036 612 1047 607 1054 612" fill="none" stroke={EDGE} />

    <g fill="#a3a3a3" stroke="#6a6a6a" strokeWidth="0.800">
      {NODES.map(([x, y]) => <circle key={`${x}-${y}`} cx={x} cy={y} r="3.800" />)}
    </g>
  </svg>
);

const Triad = () => (
  <svg viewBox="0 0 120 100" className="absolute bottom-0 left-0 h-[100px] w-[120px]" aria-hidden="true">
    <g fill="none" strokeWidth="1.300">
      <path d="M50 75L38 26l-1 0 3 20 6-1-8-19" stroke="#10e818" /><path d="M38 27l2 18 5-1z" fill="#10e818" />
      <path d="M50 75L20 55l7 9 5-5-12-4 9 7" stroke="#e03020" /><path d="M50 75L100 50 80 57l2 8 18-15-17 11" stroke="#1c20d8" />
    </g>
    <g fill="#eee" fontSize="17" fontFamily="Liberation Sans, Arial, sans-serif">
      <text x="33" y="15">Y</text><text x="12" y="50">X</text><text x="107" y="46">Z</text>
    </g>
  </svg>
);

const SIDE_TOOLS = [
  'maskBox', 'maskReverse', 'unmaskAdj', 'unmaskAll', 'unmaskBox', 'sphere', 'find', 'numbers', 'scale',
  'elemAbc', 'loadAbc', 'loadsElem', 'surfPoints',
];
const PRESSED = ['elemAbc', 'surfPoints'];

const SideToolbar = () => (
  <div className="flex w-14 shrink-0 flex-col items-center pt-[11px] pl-1">
    <div className="mb-[5px] flex w-7 justify-between">
      {[0, 1, 2, 3].map(i => <span key={i} className="size-[3px] bg-black" />)}
    </div>
    {SIDE_TOOLS.map(n => (
      <button
        key={n}
        type="button"
        aria-label={n}
        aria-pressed={PRESSED.includes(n)}
        className="my-px flex h-[33px] w-[33px] items-center justify-center border border-transparent aria-pressed:border-[#9f9f9f] aria-pressed:bg-linear-to-b aria-pressed:from-[#f8d8ac] aria-pressed:to-[#efb068]"
      >
        <Icon name={n} />
      </button>
    ))}
  </div>
);

const GraphicsArea = () => (
  <section className="relative mt-[6px] mr-[6px] min-h-0 flex-1 overflow-hidden bg-linear-to-b from-[#28557f] to-[#a1a1a1]">
    <ModelDrawing />
    <Triad />
    <p className="relative pt-[10px] pr-[7px] text-right text-[17px] leading-5 text-white">
      Model Info: C:/Users/Administrator/Desktop/Practice/HM_2010/clip_repair.hm
    </p>
  </section>
);

/* ---------- lower panels ---------- */

const BottomToolbar = () => (
  <div className="flex h-[43px] shrink-0 items-center overflow-hidden pb-[2px] pl-px">
    <Tools
      items={[
        ':', 'assembly', 'component', 'material', 'property', 'loadCol', 'systemCol', 'v', '|',
        'remove', 'cards', 'organize', 'renumber', ':',
      ]}
    />
    <Combo icon="byTopo" label="Geometry color mode" options={['By Topo']} className="w-[124px]" />
    <Tools items={['surfWire', 'v', 'surfSolid', 'v', 'glassCube', '|']} />
    <Combo icon="byComp" label="Element color mode" options={['By Comp']} className="w-[130px]" />
    <Tools items={['rubikWire', 'v', 'rubikSolid', 'v', 'lineElem', 'v', 'shell', 'v', 'slab', 'v', 'tiles', 'monitor', ':', 'star']} />
  </div>
);

const PanelMenu = () => {
  const [page, setPage] = useState('Geom');

  return (
    <div className="mr-[6px] mb-1 ml-1 grid shrink-0 grid-cols-[276fr_276fr_266fr_260fr_260fr_140fr] border-b-2 border-[#858585] pt-[7px] pb-1 text-[17px] leading-5">
      {PANELS.map(column => (
        <div key={column[0]} className="flex flex-col">
          {column.map(label => (
            <button key={label} type="button" className="h-[25px] border-t-2 border-r-2 border-b-2 border-l border-t-white border-r-[#808080] border-b-[#808080] border-l-white pl-[3px]">
              {label}
            </button>
          ))}
        </div>
      ))}
      <fieldset className="flex flex-col pl-[14px]">
        {PAGES.map(p => (
          <label key={p} className="flex h-[25px] items-center gap-[13px]">
            <input
              type="radio"
              name="page"
              checked={page === p}
              onChange={() => setPage(p)}
              className="size-[14px] appearance-none rounded-full border-2 border-t-[#555] border-r-[#e6e6e6] border-b-[#e6e6e6] border-l-[#555] bg-white checked:bg-[radial-gradient(circle,#000_2px,#fff_3px)]"
            />
            {p}
          </label>
        ))}
      </fieldset>
    </div>
  );
};

const statusCell = 'flex items-center border-t-2 border-l-2 border-[#484848] pl-px';

const StatusBar = () => (
  <footer className="flex h-7 shrink-0 items-stretch text-[17px] leading-5">
    <p className="flex flex-1 items-center pt-1 pl-2">Geometry</p>
    <div className="mt-[3px] grid w-[663px] grid-cols-[155fr_155fr_178fr_168fr] gap-[2px]">
      <div className={statusCell} />
      <div className={statusCell}>Model</div>
      <div className={`${statusCell} gap-[5px] pl-[6px]`}>
        <span className="size-[13px] border-2 border-black bg-[#3048f0]" />lvl10
      </div>
      <div className={statusCell} />
    </div>
  </footer>
);

const App = () => (
  <div className="flex h-screen flex-col overflow-hidden bg-[#efefef] font-['Liberation_Sans',Arial,sans-serif] text-[#1a1a1a]">
    <nav className="-ml-1 flex h-[11px] shrink-0 items-end gap-5 overflow-hidden bg-white font-['Open_Sans',sans-serif] text-[15px] leading-[18px] text-[#777]">
      {MENUS.map(m => <button key={m} type="button">{m}</button>)}
    </nav>
    <TopToolbar />
    <div className="flex min-h-0 flex-1">
      <ModelBrowser />
      <main className="ml-[6px] flex min-w-0 flex-1 flex-col border-l border-[#777]">
        <div className="flex min-h-0 flex-1">
          <SideToolbar />
          <GraphicsArea />
        </div>
        <BottomToolbar />
        <PanelMenu />
      </main>
    </div>
    <StatusBar />
  </div>
);

export default App;
